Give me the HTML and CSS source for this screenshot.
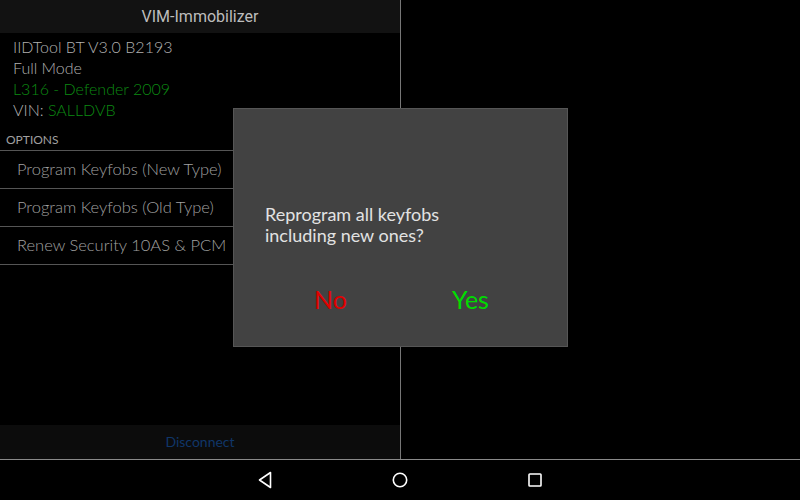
FILE: index.html
```html
<!DOCTYPE html>
<html>
<head>
<meta charset="utf-8">
<link rel="stylesheet" href="styles.css">
</head>
<body>
<div class="screen">
  <div class="main">
    <div class="panel">
      <div class="titlebar">VIM-Immobilizer</div>
      <div class="info">
        <div class="line">IIDTool BT V3.0 B2193</div>
        <div class="line">Full Mode</div>
        <div class="line green">L316 - Defender 2009</div>
        <div class="line">VIN: <span class="green">SALLDVB</span></div>
      </div>
      <div class="options-label">OPTIONS</div>
      <div class="row">Program Keyfobs (New Type)</div>
      <div class="row">Program Keyfobs (Old Type)</div>
      <div class="row">Renew Security 10AS &amp; PCM</div>
      <div class="spacer"></div>
      <div class="disconnect">Disconnect</div>
    </div>
    <div class="right"></div>
  </div>
  <div class="navbar">
    <svg class="nav-icon" width="16" height="18" viewBox="0 0 16 18"><path d="M13.5 1.5 L2.5 9 L13.5 16.5 Z" fill="none" stroke="#fff" stroke-width="1.6" stroke-linejoin="round"/></svg>
    <svg class="nav-icon" width="18" height="18" viewBox="0 0 18 18"><circle cx="9" cy="9" r="6.7" fill="none" stroke="#fff" stroke-width="1.6"/></svg>
    <svg class="nav-icon" width="16" height="16" viewBox="0 0 16 16"><rect x="2" y="2" width="12" height="12" rx="0.8" fill="none" stroke="#fff" stroke-width="1.6"/></svg>
  </div>
  <div class="dialog">
    <div class="dialog-text">Reprogram all keyfobs<br>including new ones?</div>
    <div class="dialog-buttons">
      <div class="btn no">No</div>
      <div class="btn yes">Yes</div>
    </div>
  </div>
</div>
</body>
</html>
```

FILE: styles.css
```css
html, body {
  margin: 0;
  padding: 0;
  background: #000;
}
.screen {
  position: relative;
  width: 800px;
  height: 500px;
  background: #000;
  overflow: hidden;
  font-family: "Lato", "Open Sans", sans-serif;
}
.main {
  display: flex;
  height: 459px;
  border-bottom: 1px solid #8a8a8a;
}
.panel {
  width: 400px;
  border-right: 1px solid #777;
  display: flex;
  flex-direction: column;
}
.right {
  flex: 1;
}
.titlebar {
  height: 33px;
  background: #121212;
  color: #bdbdbd;
  font-family: "Roboto", sans-serif;
  font-size: 16px;
  line-height: 34px;
  text-align: center;
}
.info {
  padding: 3px 0 0 13px;
}
.line {
  font-size: 16px;
  font-weight: 300;
  line-height: 21px;
  color: #b0b0b0;
}
.green {
  color: #0c8a12;
}
.options-label {
  padding: 13px 0 3px 6px;
  font-size: 12px;
  line-height: 14px;
  color: #a0a0a0;
  border-bottom: 1px solid #555;
}
.row {
  height: 37px;
  line-height: 37px;
  padding-left: 17px;
  font-size: 16.5px;
  font-weight: 300;
  color: #a0a0a0;
  border-bottom: 1px solid #555;
}
.spacer {
  flex: 1;
}
.disconnect {
  height: 34px;
  background: #0c0c0c;
  color: #103668;
  font-size: 14px;
  line-height: 34px;
  text-align: center;
}
.navbar {
  height: 40px;
  display: flex;
  justify-content: center;
  align-items: center;
  gap: 118px;
}
.nav-icon {
  display: block;
}
.dialog {
  position: absolute;
  left: 233px;
  top: 108px;
  width: 333px;
  height: 237px;
  background: #424242;
  border: 1px solid #565656;
}
.dialog-text {
  padding: 95px 0 0 31px;
  font-size: 18px;
  line-height: 21px;
  color: #e2e2e2;
}
.dialog-buttons {
  display: flex;
  justify-content: center;
  margin-top: 38px;
}
.btn {
  width: 140px;
  text-align: center;
  font-size: 25px;
  line-height: 30px;
}
.no {
  color: #e00000;
}
.yes {
  color: #00dd00;
}
```
